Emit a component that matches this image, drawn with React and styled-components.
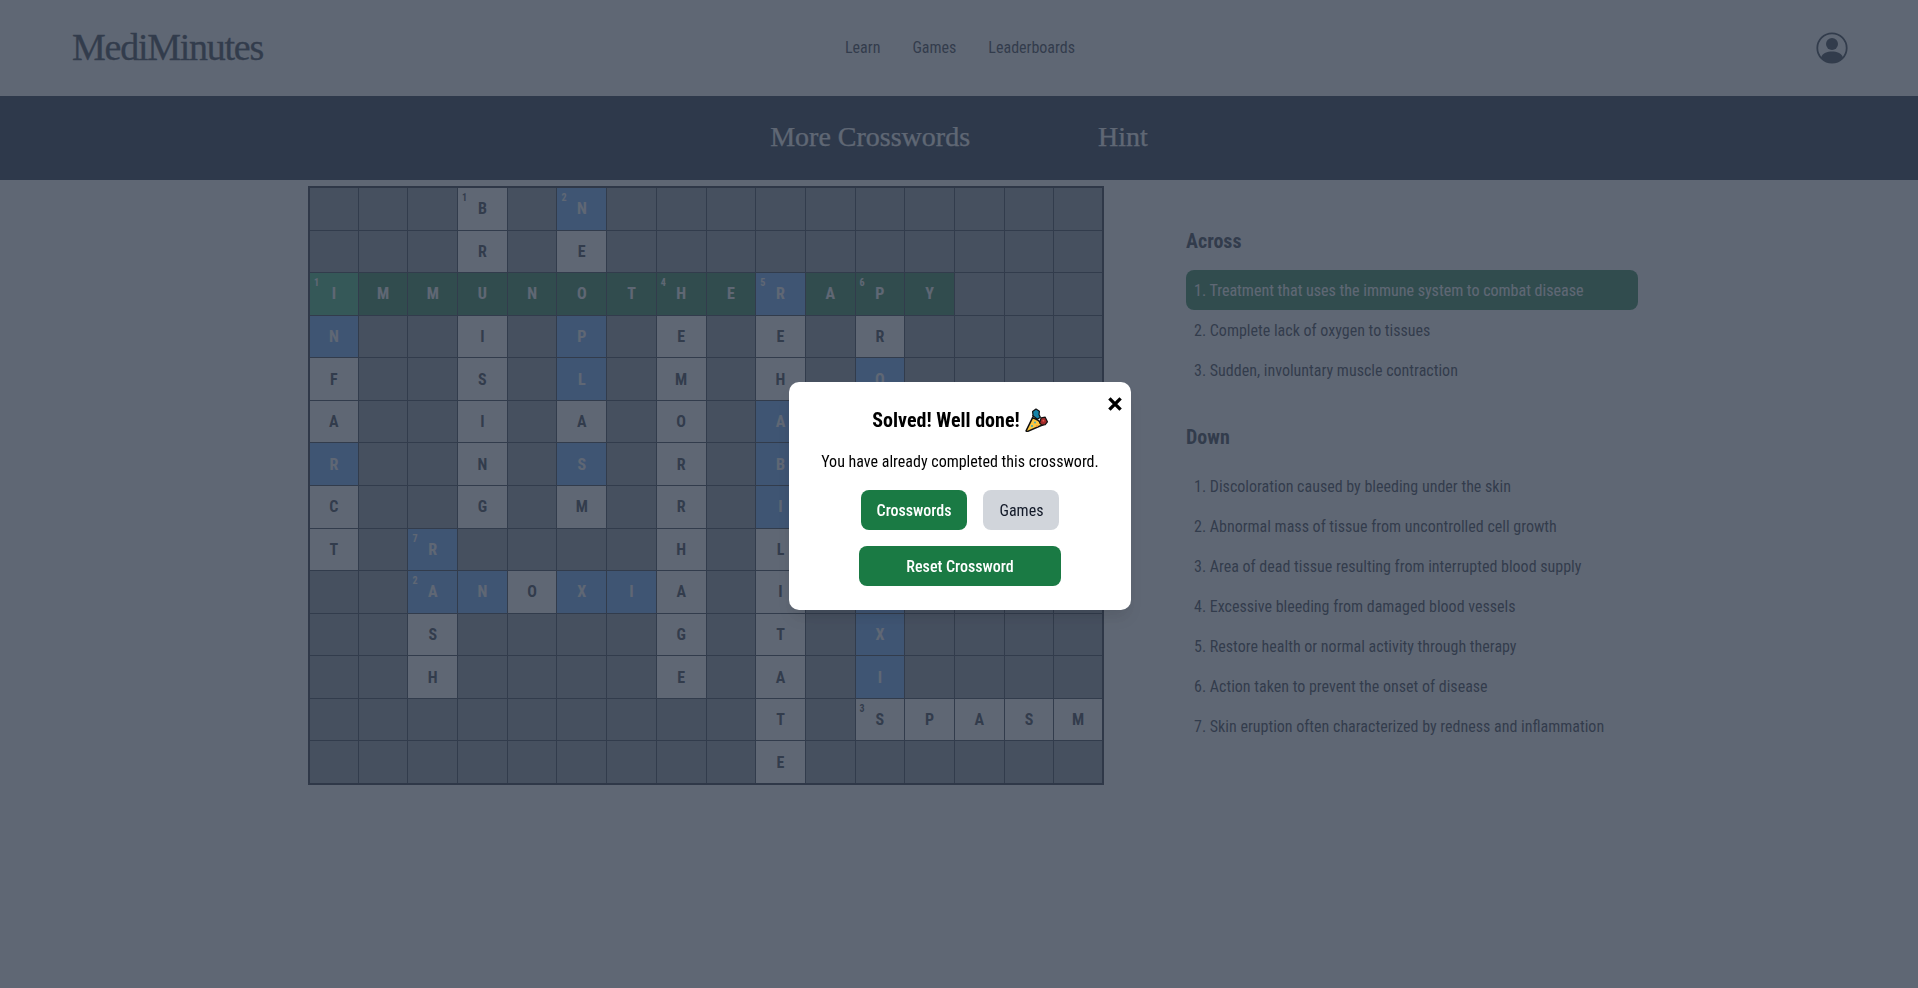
import React from "react";
import styled, { createGlobalStyle } from "styled-components";

const GlobalStyle = createGlobalStyle`
  html, body {
    margin: 0;
    padding: 0;
    background: #ffffff;
    font-family: "Roboto Condensed", "Roboto", "Liberation Sans", sans-serif;
    font-stretch: 75%;
  }
  * { box-sizing: border-box; }
`;

const across = [
  [0, 2, "IMMUNOTHERAPY"],
  [2, 9, "ANOXIA"],
  [11, 12, "SPASM"],
];
const down = [
  [3, 0, "BRUISING"],
  [5, 0, "NEOPLASM"],
  [2, 8, "RASH"],
  [0, 2, "INFARCT"],
  [7, 2, "HEMORRHAGE"],
  [9, 2, "REHABILITATE"],
  [11, 2, "PROPHYLAXIS"],
];
const blue = new Set([
  "0-5", "2-9", "3-0", "3-5", "4-5", "4-11", "5-9", "6-0", "6-5", "6-9", "7-9",
  "8-2", "9-2", "9-3", "9-5", "9-6", "9-11", "10-11", "11-11",
]);
const numbers = {
  "0-3": 1, "0-5": 2, "2-0": 1, "2-7": 4, "2-9": 5, "2-11": 6, "8-2": 7, "9-2": 2, "12-11": 3,
};

const letters = {};
across.forEach(([c, r, word]) => [...word].forEach((l, i) => (letters[`${r}-${c + i}`] = l)));
down.forEach(([c, r, word]) => [...word].forEach((l, i) => (letters[`${r + i}-${c}`] = l)));

const rows = Array.from({ length: 14 }, (_, r) => r);
const cols = Array.from({ length: 16 }, (_, c) => c);

const acrossClues = [
  "1. Treatment that uses the immune system to combat disease",
  "2. Complete lack of oxygen to tissues",
  "3. Sudden, involuntary muscle contraction",
];
const downClues = [
  "1. Discoloration caused by bleeding under the skin",
  "2. Abnormal mass of tissue from uncontrolled cell growth",
  "3. Area of dead tissue resulting from interrupted blood supply",
  "4. Excessive bleeding from damaged blood vessels",
  "5. Restore health or normal activity through therapy",
  "6. Action taken to prevent the onset of disease",
  "7. Skin eruption often characterized by redness and inflammation",
];

const PartyPopper = () => (
  <PopperIcon viewBox="0 0 24 24">
    <path d="M2.2 22.6L8.6 9.6c3.4 1.2 7.6 3.8 10.4 7.2L3.6 23.4c-.9.3-1.7-.1-1.4-.8z" fill="#fcc63f" stroke="#111" strokeWidth="1.5" strokeLinejoin="round" />
    <circle cx="8" cy="18" r="1" fill="#2aa7c9" />
    <circle cx="11" cy="14.5" r="0.9" fill="#2aa7c9" />
    <circle cx="13" cy="18" r="0.9" fill="#f08a3c" />
    <path d="M9.2 8.6L8.6 3.6 12 1l3.4 2.2-.4 3.4 1.4 2.6-3 2-4.8-3.6z" fill="#1583a8" stroke="#111" strokeWidth="1.2" strokeLinejoin="round" />
    <path d="M15.6 14.8l1.6-5 4-.6 2.2 4.6-2.2 2.8-3.4.6-2.2-2.4z" fill="#a32a2a" stroke="#111" strokeWidth="1.2" strokeLinejoin="round" />
    <circle cx="19.4" cy="12.8" r="1" fill="#e2574c" />
  </PopperIcon>
);

const App = () => {
  return (
    <Page>
      <GlobalStyle />
      <Header>
        <Logo>MediMinutes</Logo>
        <Nav>
          <NavLink>Learn</NavLink>
          <NavLink>Games</NavLink>
          <NavLink>Leaderboards</NavLink>
        </Nav>
        <Avatar viewBox="0 0 32 32">
          <circle cx="16" cy="16" r="14.7" fill="none" stroke="currentColor" strokeWidth="1.8" />
          <circle cx="16" cy="12" r="6" fill="currentColor" />
          <path d="M5 25.5C7 21 11 19.6 16 19.6s9 1.4 11 5.9C24.5 28.6 20.5 30.6 16 30.6S7.5 28.6 5 25.5z" fill="currentColor" />
        </Avatar>
      </Header>
      <ActionBar>
        <ActionLink>More Crosswords</ActionLink>
        <ActionLink>Hint</ActionLink>
      </ActionBar>
      <Main>
        <Board>
          {rows.map((r) =>
            cols.map((c) => {
              const key = `${r}-${c}`;
              const letter = letters[key];
              let tone = letter ? "white" : "empty";
              if (r === 2 && c <= 12) tone = c === 0 ? "active" : "green";
              if (blue.has(key)) tone = "blue";
              return (
                <Cell key={key} $tone={tone}>
                  {numbers[key] && <CellNumber>{numbers[key]}</CellNumber>}
                  {letter}
                </Cell>
              );
            })
          )}
        </Board>
        <Clues>
          <ClueTitle>Across</ClueTitle>
          <ClueList>
            {acrossClues.map((clue, i) => (
              <Clue key={clue} $active={i === 0}>{clue}</Clue>
            ))}
          </ClueList>
          <ClueTitle $second>Down</ClueTitle>
          <ClueList>
            {downClues.map((clue) => (
              <Clue key={clue}>{clue}</Clue>
            ))}
          </ClueList>
        </Clues>
      </Main>
      <Overlay>
        <Modal>
          <CloseButton>
            <svg width="16" height="16" viewBox="0 0 16 16">
              <path d="M2.4 2.4l11.2 11.2M13.6 2.4L2.4 13.6" stroke="#000" strokeWidth="3.4" />
            </svg>
          </CloseButton>
          <ModalTitle>Solved! Well done! <PartyPopper /></ModalTitle>
          <ModalText>You have already completed this crossword.</ModalText>
          <ButtonRow>
            <ModalButton $green>Crosswords</ModalButton>
            <ModalButton>Games</ModalButton>
          </ButtonRow>
          <ModalButton $green $wide>Reset Crossword</ModalButton>
        </Modal>
      </Overlay>
    </Page>
  );
};

export default App;

const Page = styled.div`
  min-height: 988px;
  background: #ffffff;
  color: #1f2937;
`;

const Header = styled.header`
  height: 96px;
  padding: 0 70px 2px 72px;
  display: grid;
  grid-template-columns: 1fr auto 1fr;
  align-items: center;
`;

const Logo = styled.div`
  font-family: "Liberation Serif", serif;
  font-size: 38px;
  letter-spacing: -1.25px;
  -webkit-text-stroke: 0.35px #1f2937;
  color: #1f2937;
`;

const Nav = styled.nav`
  display: flex;
  gap: 32px;
`;

const NavLink = styled.a`
  font-size: 16px;
  color: #1f2937;
`;

const Avatar = styled.svg`
  width: 32px;
  height: 32px;
  margin-top: 2px;
  justify-self: end;
  color: #1f2937;
`;

const ActionBar = styled.div`
  height: 84px;
  padding-bottom: 2px;
  background: #0a1a33;
  display: flex;
  justify-content: center;
  align-items: center;
  gap: 128px;
  color: #ffffff;
`;

const ActionLink = styled.a`
  font-family: "Liberation Serif", serif;
  font-size: 28px;
  -webkit-text-stroke: 0.25px #ffffff;
`;

const Main = styled.main`
  display: flex;
  padding: 6px 0 0 308px;
`;

const Board = styled.div`
  width: 796px;
  height: 599px;
  display: grid;
  grid-template-columns: 47.7px repeat(14, 48.7px) 1fr;
  grid-template-rows: repeat(14, 1fr);
  gap: 1px;
  border: 2px solid #111827;
  background: #1f2937;
`;

const toneColor = {
  white: "#ffffff",
  empty: "#848c97",
  blue: "#60a5fa",
  green: "#1a7a44",
  active: "#2fb574",
};

const Cell = styled.div`
  position: relative;
  display: flex;
  align-items: center;
  justify-content: center;
  font-size: 16px;
  font-weight: 700;
  background: ${({ $tone }) => toneColor[$tone]};
  color: ${({ $tone }) => ($tone === "white" ? "#1f2937" : "#ffffff")};
`;

const CellNumber = styled.span`
  position: absolute;
  top: 4px;
  left: 4px;
  font-size: 10px;
  font-weight: 700;
`;

const Clues = styled.aside`
  width: 452px;
  margin-left: 82px;
  padding-top: 41px;
`;

const ClueTitle = styled.h3`
  margin: ${({ $second }) => ($second ? "33px" : "0")} 0 15px;
  font-size: 20px;
  font-weight: 700;
  line-height: 28px;
`;

const ClueList = styled.ul`
  margin: 0;
  padding: 0;
  list-style: none;
  display: flex;
  flex-direction: column;
`;

const Clue = styled.li`
  height: 40px;
  padding: 0 8px;
  display: flex;
  align-items: center;
  border-radius: 8px;
  font-size: 16px;
  background: ${({ $active }) => ($active ? "#1a7a44" : "transparent")};
  color: ${({ $active }) => ($active ? "#ffffff" : "#1f2937")};
`;

const Overlay = styled.div`
  position: fixed;
  inset: 0;
  padding: 4px 0 0 2px;
  display: flex;
  align-items: center;
  justify-content: center;
  background: rgba(55, 65, 81, 0.8);
`;

const Modal = styled.div`
  position: relative;
  width: 342px;
  height: 228px;
  padding: 24px 24px 0;
  background: #ffffff;
  border-radius: 10px;
  display: flex;
  flex-direction: column;
  align-items: center;
  color: #000000;
  box-shadow: 0 10px 15px -3px rgba(0, 0, 0, 0.1);
`;

const CloseButton = styled.button`
  position: absolute;
  top: 14px;
  right: 8px;
  border: 0;
  padding: 0;
  background: none;
  line-height: 0;
`;

const ModalTitle = styled.h2`
  margin: 0 0 16px;
  display: flex;
  align-items: center;
  gap: 4px;
  font-size: 20px;
  font-weight: 700;
  line-height: 28px;
`;

const PopperIcon = styled.svg`
  width: 24px;
  height: 24px;
`;

const ModalText = styled.p`
  margin: 0 0 16px;
  font-size: 16px;
  line-height: 24px;
`;

const ButtonRow = styled.div`
  display: flex;
  gap: 16px;
  margin-bottom: 16px;
`;

const ModalButton = styled.button`
  height: 40px;
  padding: 0 16px;
  width: ${({ $wide }) => ($wide ? "202px" : "auto")};
  border: 0;
  border-radius: 8px;
  font: inherit;
  font-size: 16px;
  font-weight: ${({ $green }) => ($green ? 500 : 400)};
  background: ${({ $green }) => ($green ? "#1a7a44" : "#d1d5db")};
  color: ${({ $green }) => ($green ? "#ffffff" : "#111827")};
`;
